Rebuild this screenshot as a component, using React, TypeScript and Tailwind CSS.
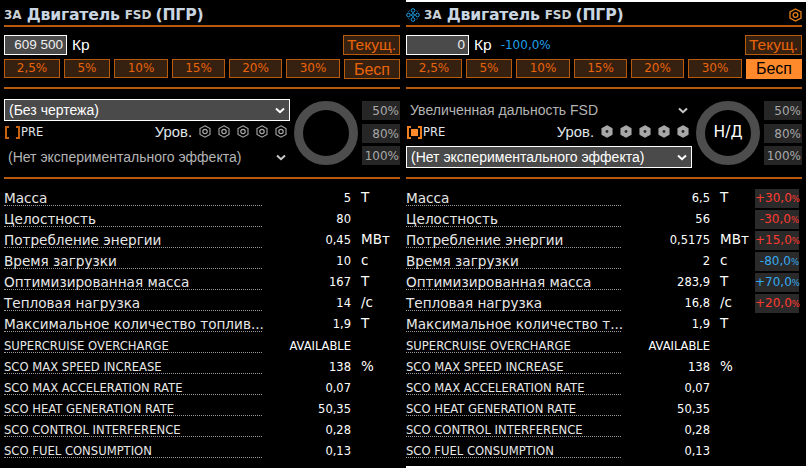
import React from "react";

const SANS = "font-['Liberation_Sans',Arial,sans-serif]";
const WIDE = "font-['DejaVu_Sans',Verdana,sans-serif]";

function Chevron({ dim }: { dim?: boolean }) {
  return (
    <svg width="10" height="7" viewBox="0 0 10 7" className={dim ? "text-[#c8c8c8]" : "text-white"}>
      <path d="M1 1.5 L5 5.2 L9 1.5" fill="none" stroke="currentColor" strokeWidth="2" />
    </svg>
  );
}

function Hex({ filled }: { filled?: boolean }) {
  return (
    <svg width="12" height="13" viewBox="0 0 12 13" className="text-[#a8a8a8]">
      <path
        d="M6 .8 L11 3.6 V9.4 L6 12.2 L1 9.4 V3.6 Z"
        fill={filled ? "currentColor" : "none"}
        stroke="currentColor"
        strokeWidth="1.1"
      />
      {filled ? (
        <circle cx="6" cy="6.5" r="1.4" fill="#2a2a2a" />
      ) : (
        <circle cx="6" cy="6.5" r="2.2" fill="none" stroke="currentColor" strokeWidth="1.2" />
      )}
    </svg>
  );
}

function Btn({ w, children }: { w: string; children: React.ReactNode }) {
  return (
    <div className={`${w} h-[19px] border border-[#b85a0c] bg-[#36200f] text-[#e8640a] text-[12px] leading-[17px] text-center ${WIDE}`}>
      {children}
    </div>
  );
}

type Row = { label: string; value: string; unit?: string; delta?: string; tone?: "red" | "blue"; small?: boolean };

const leftRows: Row[] = [
  { label: "Масса", value: "5", unit: "Т" },
  { label: "Целостность", value: "80" },
  { label: "Потребление энергии", value: "0,45", unit: "МВт" },
  { label: "Время загрузки", value: "10", unit: "с" },
  { label: "Оптимизированная масса", value: "167", unit: "Т" },
  { label: "Тепловая нагрузка", value: "14", unit: "/с" },
  { label: "Максимальное количество топлив...", value: "1,9", unit: "Т" },
  { label: "SUPERCRUISE OVERCHARGE", value: "AVAILABLE", small: true },
  { label: "SCO MAX SPEED INCREASE", value: "138", unit: "%", small: true },
  { label: "SCO MAX ACCELERATION RATE", value: "0,07", small: true },
  { label: "SCO HEAT GENERATION RATE", value: "50,35", small: true },
  { label: "SCO CONTROL INTERFERENCE", value: "0,28", small: true },
  { label: "SCO FUEL CONSUMPTION", value: "0,13", small: true },
];

const rightRows: Row[] = [
  { label: "Масса", value: "6,5", unit: "Т", delta: "+30,0", tone: "red" },
  { label: "Целостность", value: "56", delta: "-30,0", tone: "red" },
  { label: "Потребление энергии", value: "0,5175", unit: "МВт", delta: "+15,0", tone: "red" },
  { label: "Время загрузки", value: "2", unit: "с", delta: "-80,0", tone: "blue" },
  { label: "Оптимизированная масса", value: "283,9", unit: "Т", delta: "+70,0", tone: "blue" },
  { label: "Тепловая нагрузка", value: "16,8", unit: "/с", delta: "+20,0", tone: "red" },
  { label: "Максимальное количество т...", value: "1,9", unit: "Т" },
  { label: "SUPERCRUISE OVERCHARGE", value: "AVAILABLE", small: true },
  { label: "SCO MAX SPEED INCREASE", value: "138", unit: "%", small: true },
  { label: "SCO MAX ACCELERATION RATE", value: "0,07", small: true },
  { label: "SCO HEAT GENERATION RATE", value: "50,35", small: true },
  { label: "SCO CONTROL INTERFERENCE", value: "0,28", small: true },
  { label: "SCO FUEL CONSUMPTION", value: "0,13", small: true },
];

function Stats({ rows, labelW, deltas }: { rows: Row[]; labelW: string; deltas?: boolean }) {
  return (
    <div className="mt-[6px] flex flex-col">
      {rows.map((r) => (
        <div key={r.label} className="flex h-[21px] items-start text-[#e8e8e8]">
          <div
            className={`${labelW} h-[21px] border-b border-dotted border-[#999] whitespace-nowrap ${WIDE} ${
              r.small ? "text-[11.6px] leading-[29px]" : "text-[13.6px] leading-[26px]"
            }`}
          >
            {r.label}
          </div>
          <div className={`w-[89px] ${r.small ? "pt-[5px]" : "pt-[4px]"} text-right text-[11.5px] leading-[18px] whitespace-nowrap text-white ${WIDE}`}>
            {r.value}
          </div>
          <div className={`w-[45px] ${r.small ? "pt-[4px]" : "pt-[3px]"} pl-[10px] text-[13.5px] leading-[18px] text-white ${WIDE}`}>{r.unit}</div>
          {deltas && r.delta ? (
            <div
              className={`w-[44px] h-[19px] mt-[4px] bg-[#2a2a2a] text-right whitespace-nowrap text-[12px] leading-[19px] ${WIDE} ${
                r.tone === "red" ? "text-[#ff3b30]" : "text-[#36a9ee]"
              }`}
            >
              {r.delta}
              <span className="text-[8.5px]">%</span>
            </div>
          ) : null}
        </div>
      ))}
    </div>
  );
}

function Pct({ children }: { children: React.ReactNode }) {
  return <div className={`w-[38px] h-[19px] bg-[#262626] text-[#a8a8a8] text-right pr-[1px] text-[12px] leading-[20px] ${WIDE}`}>{children}</div>;
}

function Bracket({ on }: { on?: boolean }) {
  const edge = on ? "border-[#f07f20]" : "border-[#c8620f]";
  return (
    <div className="w-[15px] h-[13px] flex items-center justify-between">
      <div className={`w-[4px] h-[13px] border-l-2 border-y-2 ${edge}`} />
      {on ? <div className="w-[7px] h-[7px] bg-[#ff8a2b]" /> : null}
      <div className={`w-[4px] h-[13px] border-r-2 border-y-2 ${edge}`} />
    </div>
  );
}

function Panel({ right }: { right?: boolean }) {
  return (
    <div className={right ? "w-[400px] h-[464px] mt-[2px] shrink-0 bg-black pr-[4px]" : "w-[406px] h-[468px] shrink-0 bg-black pl-[4px] pr-[6px] pt-[2px]"}>
      <div className="h-[23px] pt-[2px] flex items-center">
        {right ? (
          <svg width="14" height="14" viewBox="0 0 14 14" className="mr-[4px] text-[#1f9fe8]">
            <g fill="none" stroke="currentColor" strokeWidth="1">
              <circle cx="7" cy="2.5" r="1.8" />
              <circle cx="7" cy="11.5" r="1.8" />
              <circle cx="2.5" cy="7" r="1.8" />
              <circle cx="11.5" cy="7" r="1.8" />
              <circle cx="7" cy="7" r="1.4" />
              <path d="M2.6 3.6 L3.6 2.6 M11.4 3.6 L10.4 2.6 M2.6 10.4 L3.6 11.4 M11.4 10.4 L10.4 11.4" />
            </g>
          </svg>
        ) : null}
        <span className={`text-[#c9d0d6] font-bold text-[12px] ${WIDE}`}>3A</span>
        <span className={`ml-[5px] text-[#c9d6e2] font-bold text-[15.7px] ${WIDE} tracking-[-0.2px]`}>Двигатель</span>
        <span className={`ml-[5px] text-[#c9d0d6] font-bold text-[12px] ${WIDE}`}>FSD</span>
        <span className={`ml-[4px] text-[#c9d6e2] font-bold text-[15.7px] ${WIDE} tracking-[-0.2px]`}>(ПГР)</span>
        {right ? (
          <svg width="13" height="14" viewBox="0 0 13 14" className="ml-auto text-[#e8801a]">
            <path d="M6.5 1 L12 4 V10 L6.5 13 L1 10 V4 Z" fill="none" stroke="currentColor" strokeWidth="1.3" />
            <circle cx="6.5" cy="7" r="2.4" fill="none" stroke="currentColor" strokeWidth="1.3" />
          </svg>
        ) : null}
      </div>
      <div className="h-[2px] bg-[#b85a0c]" />

      <div className="mt-[8px] flex items-center h-[20px]">
        <div className={`w-[63px] h-[20px] border border-white bg-[#4a4a4a] text-right pr-[3px] text-[13.5px] leading-[18px] text-[#eeeeee] ${SANS}`}>
          {right ? "0" : "609 500"}
        </div>
        <span className={`ml-[5px] text-[15.5px] text-white ${SANS}`}>Кр</span>
        {right ? <span className={`ml-[9px] text-[12px] text-[#1f9fe8] ${WIDE}`}>-100,0%</span> : null}
        <div className={`ml-auto w-[57px] h-[20px] border border-[#b85a0c] bg-[#36200f] text-[#e8640a] text-center text-[15.5px] leading-[18px] whitespace-nowrap ${SANS}`}>
          Текущ.
        </div>
      </div>

      <div className="mt-[4px] flex items-start h-[20px] gap-[4px]">
        <Btn w="w-[56px]">2,5%</Btn>
        <Btn w="w-[46px]">5%</Btn>
        <Btn w="w-[54px]">10%</Btn>
        <Btn w="w-[53px]">15%</Btn>
        <Btn w="w-[53px]">20%</Btn>
        <Btn w="w-[54px]">30%</Btn>
        <div
          className={`w-[56px] ml-auto h-[20px] text-center text-[16px] leading-[19px] ${SANS} ${
            right ? "bg-[#ff8a2b] text-black" : "border border-[#b85a0c] bg-[#36200f] text-[#e8640a]"
          }`}
        >
          Бесп
        </div>
      </div>

      <div className="mt-[8px] h-[2px] bg-[#b85a0c]" />

      <div className="mt-[10px] flex h-[78px]">
        <div className="w-[286px] flex flex-col">
          <div
            className={`h-[22px] flex items-center pl-[4px] pr-[4px] justify-between text-[14px] ${SANS} ${
              right ? "text-[#b4b4b4]" : "border border-white bg-[#4a4a4a] text-white"
            }`}
          >
            <span>{right ? "Увеличенная дальность FSD" : "(Без чертежа)"}</span>
            <Chevron dim={right} />
          </div>
          <div className="h-[25px] flex items-center pl-[1px] pb-[2px]">
            <Bracket on={right} />
            <span className={`ml-[1px] text-[11.5px] text-[#e0e6ea] ${WIDE}`}>PRE</span>
            <span className={`ml-auto mr-[7px] text-[14.8px] text-[#e0e6ea] ${SANS}`}>Уров.</span>
            <div className="flex gap-[7px] mr-[3px] mb-[3px]">
              {[0, 1, 2, 3, 4].map((i) => (
                <Hex key={i} filled={right} />
              ))}
            </div>
          </div>
          <div
            className={`h-[22px] flex items-center pl-[4px] pr-[4px] justify-between text-[14px] ${SANS} ${
              right ? "border border-white bg-[#4a4a4a] text-white" : "text-[#b4b4b4]"
            }`}
          >
            <span>(Нет экспериментального эффекта)</span>
            <Chevron dim={!right} />
          </div>
        </div>
        <div className="ml-[4px] w-[64px] h-[64px] mt-[2px] rounded-full border-[9px] border-[#4d4d4d] flex items-center justify-center shrink-0">
          {right ? <span className={`text-[15.5px] text-white ${WIDE}`}>Н/Д</span> : null}
        </div>
        <div className="ml-auto flex flex-col gap-[3.5px] mt-[2px]">
          <Pct>50%</Pct>
          <Pct>80%</Pct>
          <Pct>100%</Pct>
        </div>
      </div>

      <div className="h-[2px] bg-[#b85a0c]" />

      {right ? <Stats rows={rightRows} labelW="w-[215px]" deltas /> : <Stats rows={leftRows} labelW="w-[258px]" />}
    </div>
  );
}

export default function App() {
  return (
    <div className="flex w-[810px] h-[468px] overflow-hidden bg-white">
      <Panel />
      <Panel right />
    </div>
  );
}
